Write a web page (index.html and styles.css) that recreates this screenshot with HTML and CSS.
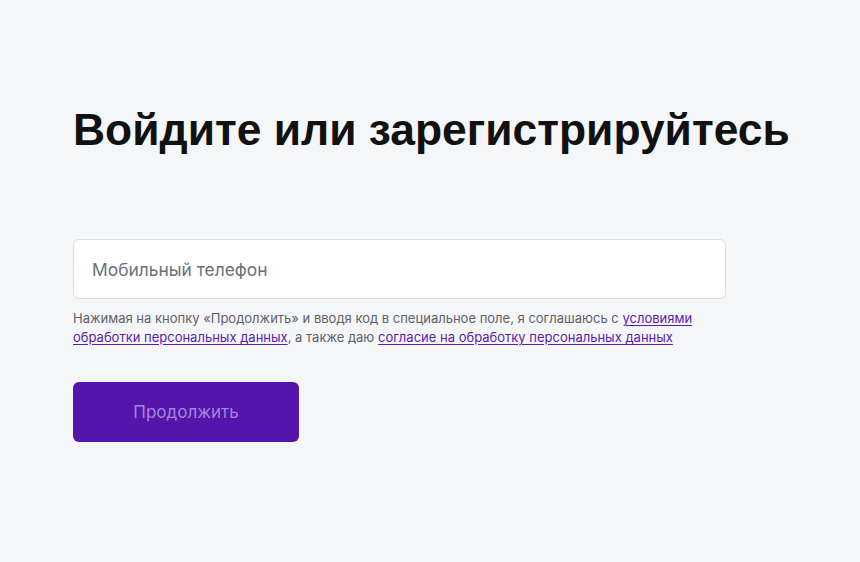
FILE: index.html
```html
<!DOCTYPE html>
<html lang="ru">
<head>
<meta charset="utf-8">
<title>Вход</title>
<link rel="stylesheet" href="styles.css">
</head>
<body>
<main class="page">
  <h1 class="title">Войдите или зарегистрируйтесь</h1>
  <form class="form">
    <input class="phone" type="tel" placeholder="Мобильный телефон">
    <p class="consent">Нажимая на кнопку «Продолжить» и вводя код в специальное поле, я соглашаюсь с <a href="#">условиями обработки персональных данных</a>, а также даю <a href="#">согласие на обработку персональных данных</a></p>
    <button class="submit" type="button">Продолжить</button>
  </form>
</main>
</body>
</html>
```
FILE: styles.css
```css
html, body {
  margin: 0;
  padding: 0;
  background: #f5f6f8;
}
body {
  font-family: Inter, "Noto Sans", sans-serif;
  color: #111;
}
.page {
  padding: 100px 0 0 73px;
}
.title {
  margin: 0;
  font-family: "Liberation Sans", Arial, sans-serif;
  font-weight: 700;
  font-size: 44.4px;
  line-height: 60px;
  color: #111111;
}
.form {
  margin-top: 79px;
  width: 653px;
  display: flex;
  flex-direction: column;
}
.phone {
  box-sizing: border-box;
  width: 653px;
  height: 60px;
  border: 1px solid #dcdfe5;
  border-radius: 6px;
  background: #ffffff;
  padding: 0 18px;
  font-family: Inter, sans-serif;
  font-size: 17.4px;
  color: #222;
  outline: none;
}
.phone::placeholder {
  color: #6b7079;
}
.consent {
  margin: 10px 0 0;
  font-size: 13px;
  line-height: 19px;
  color: #5e6168;
}
.consent a {
  color: #5b1bb3;
  text-decoration: underline;
  text-underline-offset: 2px;
}
.submit {
  margin-top: 35px;
  width: 226px;
  height: 60px;
  border: none;
  border-radius: 6px;
  background: #5515ab;
  color: #a585dc;
  font-family: Inter, sans-serif;
  font-size: 17px;
  cursor: pointer;
}
```
